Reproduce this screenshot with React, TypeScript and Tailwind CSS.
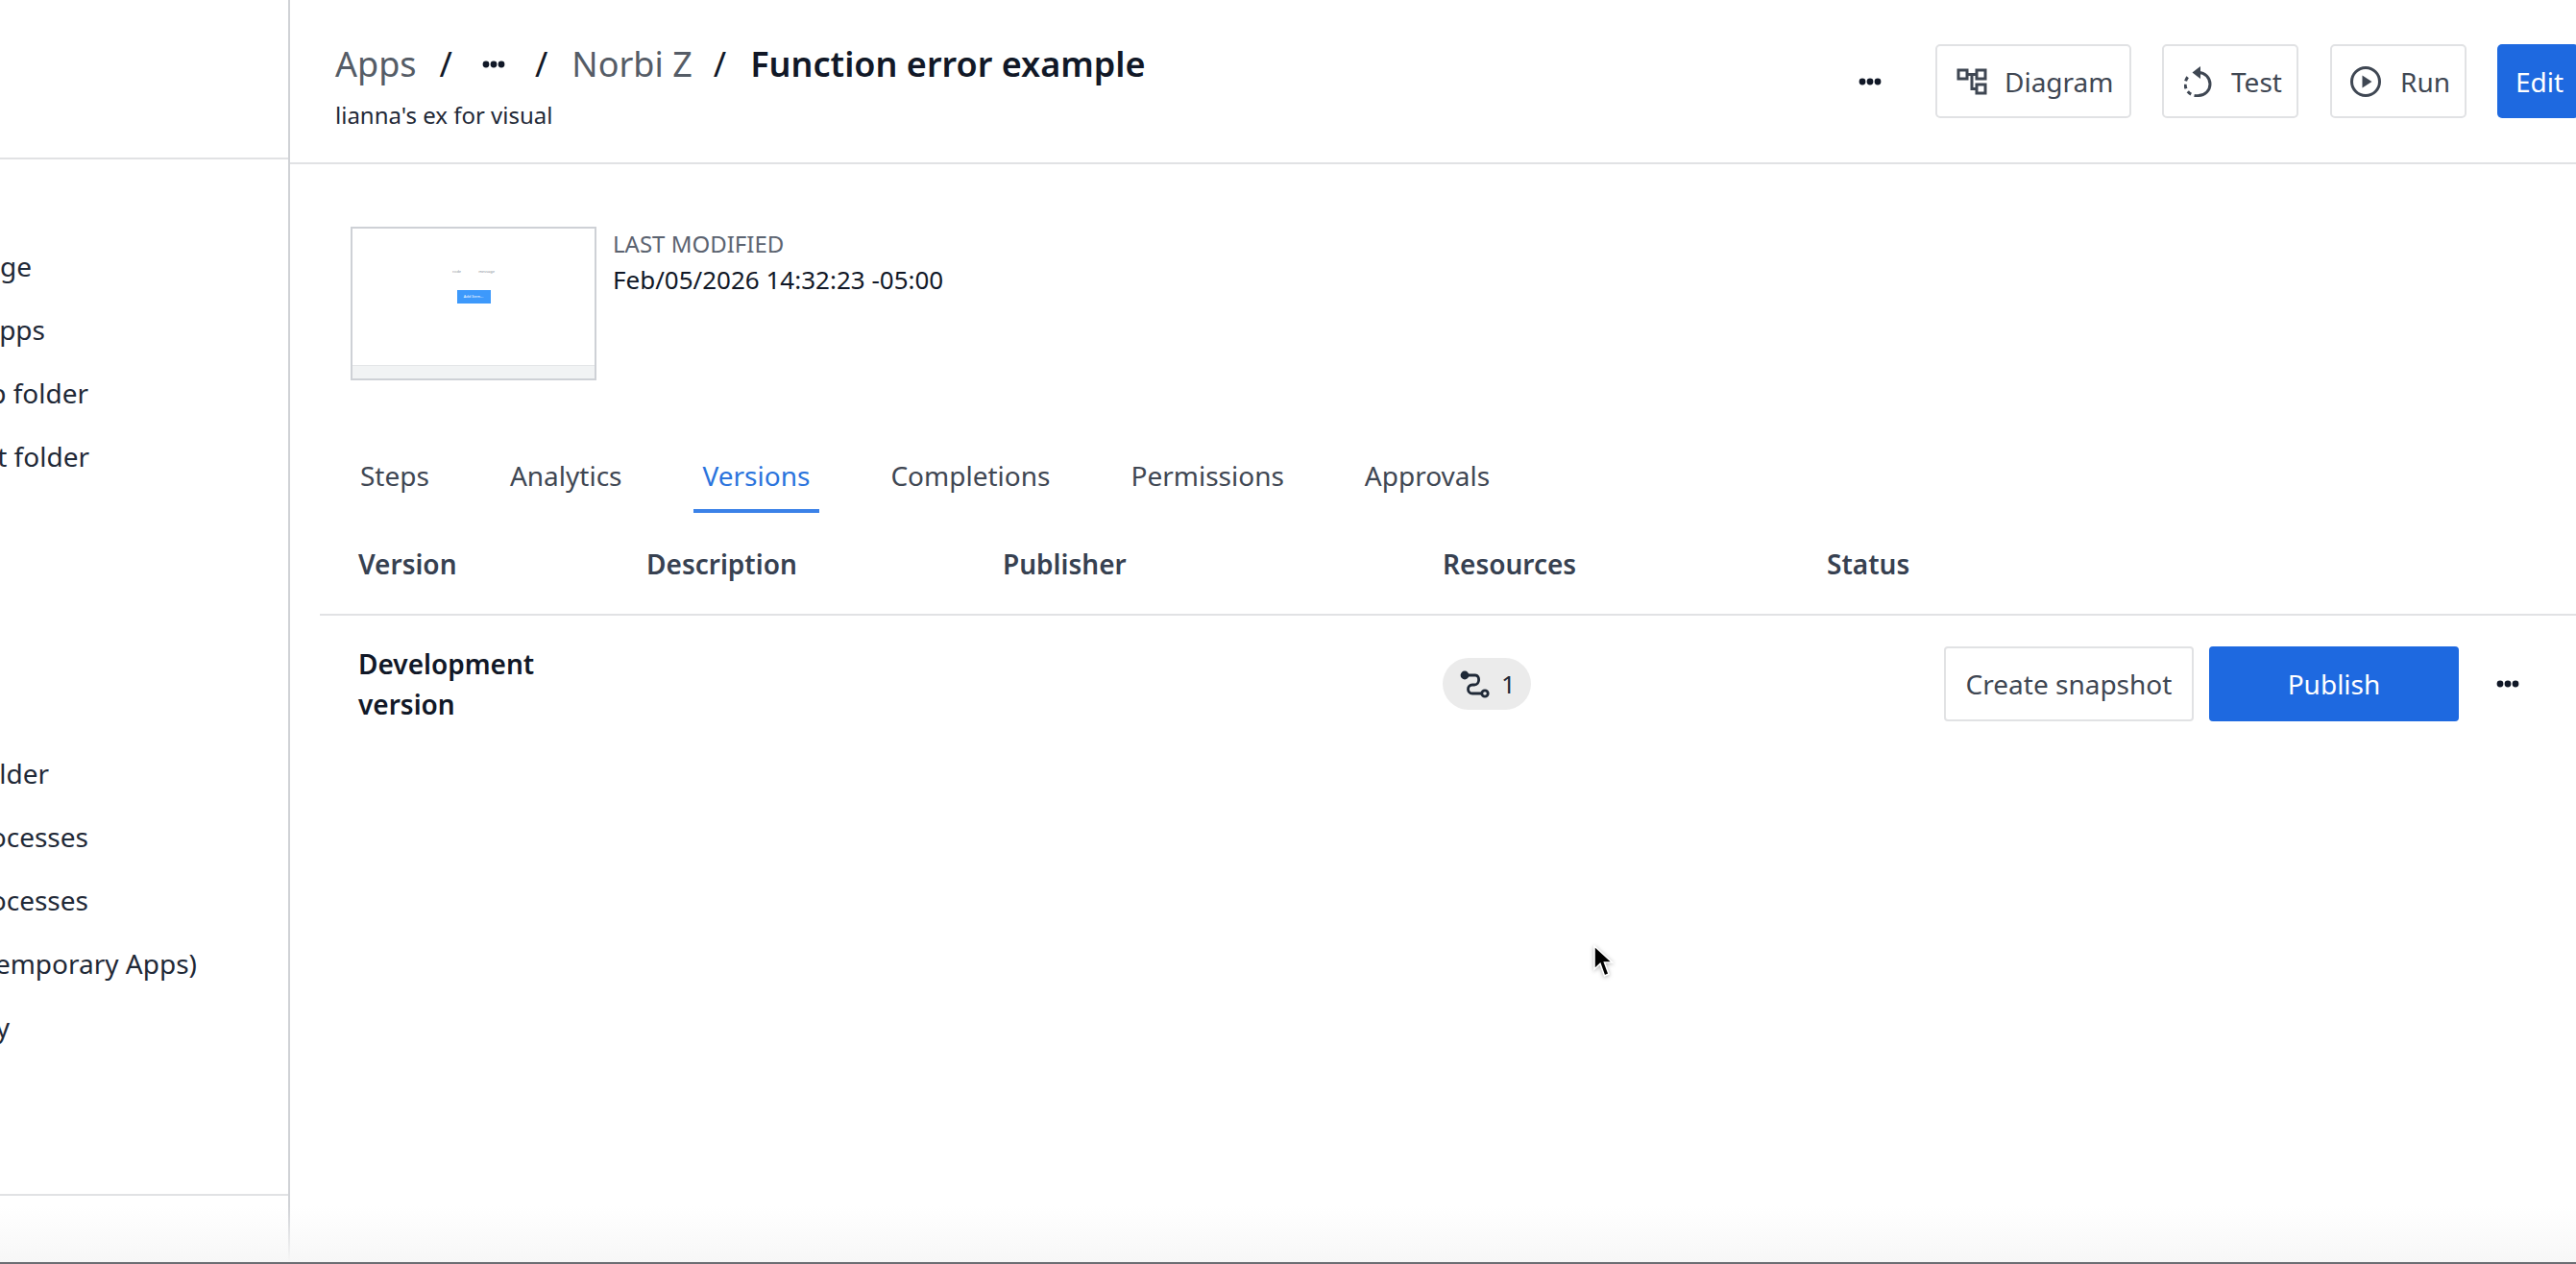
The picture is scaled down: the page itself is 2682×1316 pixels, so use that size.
const font = "font-['Noto_Sans',sans-serif]"

// Sidebar rows, clipped on the left by the page edge
const sidebarTop = [
    { label: "ge", width: "w-[33px]" },
    { label: "pps", width: "w-[47px]" },
    { label: "p folder", width: "w-[92px]" },
    { label: "t folder", width: "w-[93px]" },
]

const sidebarBottom = [
    { label: "lder", width: "w-[51px]" },
    { label: "rocesses", width: "w-[92px]" },
    { label: "rocesses", width: "w-[92px]" },
    { label: "emporary Apps)", width: "w-[205px]" },
    { label: "y", width: "w-[10px]" },
]

const tabs = ["Steps", "Analytics", "Versions", "Completions", "Permissions", "Approvals"]

const Dots = () => (
    <svg width="24" height="8" viewBox="0 0 24 8" className="shrink-0 fill-[#111827]">
        <circle cx="4" cy="4" r="3.4" />
        <circle cx="12" cy="4" r="3.4" />
        <circle cx="20" cy="4" r="3.4" />
    </svg>
)

const DiagramIcon = () => (
    <svg width="32" height="28" viewBox="0 0 32 28" fill="none" className="shrink-0 stroke-[#3f4753] stroke-[3]">
        <rect x="2" y="2" width="9" height="9" />
        <rect x="21" y="2" width="9" height="9" />
        <rect x="21" y="17" width="9" height="9" />
        <path d="M11 6.5H21M16 6.5V21.5H21" />
    </svg>
)

const TestIcon = () => (
    <svg width="30" height="32" viewBox="0 0 30 32" fill="none" className="shrink-0 stroke-[#3f4753]">
        <path d="M15 6.5A12 12 0 0 1 15 30.5" strokeWidth="3" />
        <path d="M15 30.5A12 12 0 0 1 5 9.8" strokeWidth="3" strokeDasharray="4.5 3.5" />
        <path d="M17 0V13L8.5 6.5Z" className="fill-[#3f4753] stroke-none" />
    </svg>
)

const RunIcon = () => (
    <svg width="32" height="32" viewBox="0 0 32 32" fill="none" className="shrink-0">
        <circle cx="16" cy="16" r="14.5" className="stroke-[#3f4753]" strokeWidth="3" />
        <path d="M12.5 9.5L22.5 16L12.5 22.5Z" className="fill-[#3f4753]" />
    </svg>
)

const FlowIcon = () => (
    <svg width="32" height="30" viewBox="0 0 32 30" fill="none" className="shrink-0 stroke-[#1f2937]">
        <circle cx="5" cy="6" r="4.4" className="fill-[#1f2937] stroke-none" />
        <path d="M5 6H16C21 6 21 16 15 16H13C7 16 7 25 13 25H23" strokeWidth="2.8" />
        <circle cx="26" cy="25" r="3.2" strokeWidth="2.8" />
    </svg>
)

const Cursor = () => (
    <svg width="22" height="34" viewBox="0 0 22 34" className="absolute left-[1658px] top-[984px] drop-shadow-[0_1px_2px_rgba(0,0,0,0.3)]">
        <path d="M2 1V25L8 19.5L12.5 32L17 30L12.5 18H20.5Z" fill="#000" stroke="#fff" strokeWidth="1.6" />
    </svg>
)

const OutlineButton = ({ icon, label, className }: { icon: React.ReactNode; label: string; className: string }) => (
    <button className={`flex h-[77px] items-center rounded-[5px] border-2 border-[#e1e2e4] bg-white text-[28px] text-[#3f4753] ${className}`}>
        {icon}
        <span>{label}</span>
    </button>
)

const SidebarRow = ({ label, width }: { label: string; width: string }) => (
    <div className={`flex h-[66px] items-center justify-end whitespace-nowrap text-[28px] text-[#1f2937] ${width}`}>
        <span className="shrink-0">{label}</span>
    </div>
)

const App = () => {
    return (
        <div className={`relative flex h-[1316px] w-[2682px] overflow-hidden bg-white ${font}`}>
            {/* Sidebar */}
            <aside className="flex w-[302px] shrink-0 flex-col overflow-hidden border-r-2 border-[#d0d2d6]">
                <div className="h-[166px] shrink-0 border-b-2 border-[#e1e2e4]"></div>
                <div className="flex-1 pt-[78px]">
                    {sidebarTop.map((row, index) => (
                        <SidebarRow key={`top_${index}`} label={row.label} width={row.width} />
                    ))}
                    <div className="h-[264px]"></div>
                    {sidebarBottom.map((row, index) => (
                        <SidebarRow key={`bottom_${index}`} label={row.label} width={row.width} />
                    ))}
                </div>
                <div className="h-[73px] shrink-0 border-t-2 border-[#e1e2e4]"></div>
            </aside>

            <main className="min-w-0 flex-1">
                {/* Header */}
                <header className="flex h-[171px] items-start justify-between border-b-2 border-[#e1e2e4] pl-[47px]">
                    <div className="pt-[41px]">
                        <div className="flex h-[52px] items-center whitespace-nowrap text-[36px] text-[#555c66]">
                            <span>Apps</span>
                            <span className="ml-[24px] mr-[31px] text-[#111827]">/</span>
                            <Dots />
                            <span className="ml-[31px] mr-[25px] text-[#111827]">/</span>
                            <span>Norbi Z</span>
                            <span className="ml-[22px] mr-[25px] text-[#111827]">/</span>
                            <span className="font-semibold text-[#111827]">Function error example</span>
                        </div>
                        <p className="mt-[10px] text-[24px] leading-[34px] text-[#1f2937]">lianna's ex for visual</p>
                    </div>
                    <div className="-mr-[3px] flex items-center pt-[46px]">
                        <div className="mr-[56px]"><Dots /></div>
                        <OutlineButton icon={<DiagramIcon />} label="Diagram" className="w-[204px] gap-[18px] pl-[20px]" />
                        <OutlineButton icon={<TestIcon />} label="Test" className="ml-[32px] w-[142px] gap-[19px] pl-[21px]" />
                        <OutlineButton icon={<RunIcon />} label="Run" className="ml-[33px] w-[142px] gap-[20px] pl-[19px]" />
                        <button className="ml-[32px] h-[77px] w-[85px] rounded-[5px] bg-[#1e69e0] text-left pl-[19px] text-[28px] text-white">Edit</button>
                    </div>
                </header>

                {/* Thumbnail and last modified */}
                <section className="flex pl-[63px] pt-[65px]">
                    <div className="flex h-[160px] w-[256px] flex-col border-2 border-[#ced1d6]">
                        <div className="relative flex-1">
                            <div className="flex justify-center gap-[18px] pt-[42px] text-[4px] leading-[5px] text-[#8a8f97]">
                                <span>code</span>
                                <span>message</span>
                            </div>
                            <div className="mx-auto mt-[17px] flex h-[14px] w-[35px] items-center justify-center bg-[#3d99fb] text-[4px] text-white">Add Item...</div>
                        </div>
                        <div className="h-[14px] border-t border-[#e3e6e8] bg-[#f1f3f4]"></div>
                    </div>
                    <div className="ml-[17px] pt-[3px]">
                        <div className="text-[24px] leading-[30px] text-[#5b6370]">LAST MODIFIED</div>
                        <div className="mt-[4px] text-[26px] leading-[36px] text-[#111827]">Feb/05/2026 14:32:23 -05:00</div>
                    </div>
                </section>

                {/* Tabs */}
                <nav className="mt-[72px] flex gap-[64px] pl-[63px]">
                    {tabs.map(tab => (
                        <div key={tab} className={`h-[66px] px-[10px] text-[28px] leading-[55px] ${tab === "Versions" ? "border-b-4 border-[#3b82e8] text-[#2b74dd]" : "text-[#3f4753]"}`}>
                            {tab}
                        </div>
                    ))}
                </nav>

                {/* Versions table */}
                <section className="ml-[31px]">
                    <div className="grid h-[107px] grid-cols-[300px_371px_458px_400px_1fr] items-center border-b-2 border-[#e1e2e4] pl-[40px] text-[28px] font-semibold text-[#374151]">
                        <span>Version</span>
                        <span>Description</span>
                        <span>Publisher</span>
                        <span>Resources</span>
                        <span>Status</span>
                    </div>
                    <div className="grid h-[142px] grid-cols-[300px_371px_458px_400px_1fr] items-center pl-[40px]">
                        <div className="w-[200px] text-[28px] font-semibold leading-[42px] text-[#111827]">Development version</div>
                        <div></div>
                        <div></div>
                        <div>
                            <div className="flex h-[54px] w-[92px] items-center gap-[11px] rounded-full bg-[#ebebeb] pl-[18px] text-[26px] text-[#1f2937]">
                                <FlowIcon />
                                <span>1</span>
                            </div>
                        </div>
                        <div className="flex items-center justify-end pr-[59px]">
                            <button className="h-[78px] w-[260px] rounded-[4px] border-2 border-[#e1e2e4] bg-white text-[28px] text-[#3f4753]">Create snapshot</button>
                            <button className="ml-[16px] h-[78px] w-[260px] rounded-[4px] bg-[#1e69e0] text-[28px] text-white">Publish</button>
                            <div className="ml-[39px]"><Dots /></div>
                        </div>
                    </div>
                </section>
            </main>

            <Cursor />

            {/* Bottom fade over the page */}
            <div className="pointer-events-none absolute inset-x-0 bottom-0 h-[60px] border-b-2 border-[#6b6e73] bg-gradient-to-b from-transparent to-[#f7f7f7]"></div>
        </div>
    )
}

export default App
